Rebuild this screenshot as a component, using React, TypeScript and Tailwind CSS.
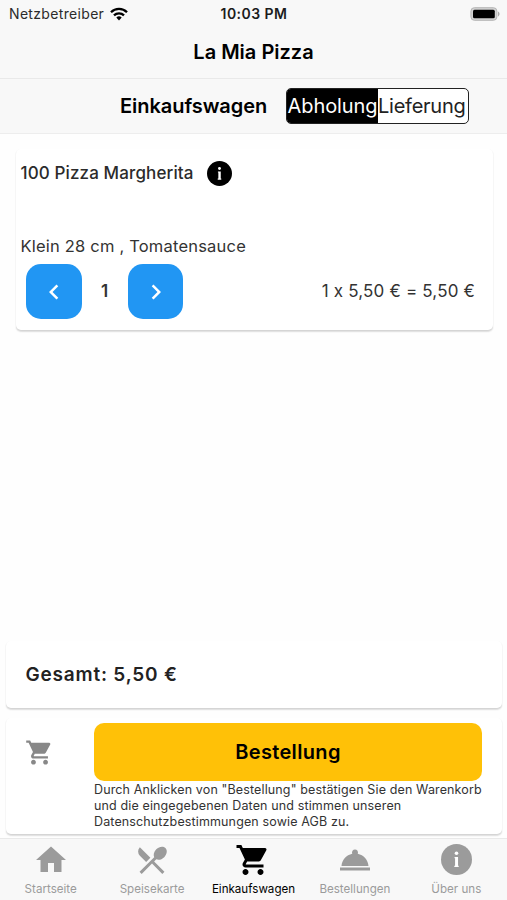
import React from "react";
import { MdHome, MdRestaurantMenu, MdShoppingCart, MdRoomService, MdChevronLeft, MdChevronRight } from "react-icons/md";

function InfoIcon({ className }: { className: string }) {
  return (
    <svg viewBox="0 0 24 24" className={className}>
      <circle cx="12" cy="12" r="12" fill="currentColor" />
      <circle cx="12" cy="7.2" r="1.4" fill="#fff" />
      <path d="M10.5 10h2.7v6.8h.5v1.1h-3.4v-1.1h.6v-5.7h-.4z" fill="#fff" />
    </svg>
  );
}

function WifiIcon() {
  return (
    <svg viewBox="0 0 18 14" className="ml-1.5 h-3.5 w-[18px]" fill="none" stroke="#000" strokeWidth="2.3">
      <path d="M1 5.2a11.3 11.3 0 0 1 16 0" />
      <path d="M4 8.4a7.1 7.1 0 0 1 10 0" />
      <path d="M6.3 10.5a3.8 3.8 0 0 1 5.4 0L9 13.4z" fill="#000" stroke="none" />
    </svg>
  );
}

function BatteryIcon() {
  return (
    <svg viewBox="0 0 30 14" className="h-3.5 w-[30px]">
      <rect x=".9" y=".7" width="26" height="12.6" rx="3.5" fill="#d2d2d2" stroke="#b5b5b5" />
      <rect x="3" y="2.7" width="21.8" height="8.6" rx="1.5" fill="#000" />
      <path d="M28 4.6c2 .7 2 4.1 0 4.8z" fill="#aaa" />
    </svg>
  );
}

const card = "rounded-[5px] bg-white shadow-[0_1.5px_1.5px_rgba(0,0,0,0.12),0_1px_1.5px_rgba(0,0,0,0.06)]";

const tabs = [
  { label: "Startseite", icon: <MdHome className="size-9" />, active: false },
  { label: "Speisekarte", icon: <MdRestaurantMenu className="size-9" />, active: false },
  { label: "Einkaufswagen", icon: <MdShoppingCart className="size-9" />, active: true },
  { label: "Bestellungen", icon: <MdRoomService className="size-9" />, active: false },
  { label: "Über uns", icon: <InfoIcon className="size-[31px]" />, active: false },
];

export default function App() {
  return (
    <div className="flex h-[900px] w-[507px] flex-col overflow-hidden bg-[#fefefe] font-['Inter',sans-serif] text-[#333]">
      <header className="h-[79px] shrink-0 border-b border-[#e9e9e9] bg-[#f8f8f8] text-black">
        <div className="grid h-[27px] grid-cols-3 items-center pr-[7px] pl-[9px]">
          <div className="flex items-center text-[14px] tracking-[0.33px] text-[#2b2b2b]">Netzbetreiber<WifiIcon /></div>
          <div className="-ml-px text-center text-[14px] font-semibold tracking-[0.45px] whitespace-nowrap text-[#1c1c1c]">10:03 PM</div>
          <div className="flex justify-end"><BatteryIcon /></div>
        </div>
        <h1 className="text-center text-[20px] leading-[51px] font-semibold">La Mia Pizza</h1>
      </header>
      <div className="flex h-[55px] shrink-0 items-center border-b border-[#ededed] bg-[#f8f8f8] pl-[120px] text-black">
        <h2 className="w-[166px] text-[20px] font-semibold tracking-[-0.05px]">Einkaufswagen</h2>
        <div className="flex h-9 w-[183px] overflow-hidden rounded-[5px] border border-[#222] bg-white text-[20px] leading-[34px]">
          <button className="flex w-[91px] justify-center bg-black tracking-[-0.1px] whitespace-nowrap text-white">Abholung</button>
          <button className="flex flex-1 justify-start tracking-[-0.25px] whitespace-nowrap text-[#222]">Lieferung</button>
        </div>
      </div>
      <main className="flex min-h-0 flex-1 flex-col">
        <section className={`${card} mr-[14px] ml-[15.5px] mt-[15px] h-[181px]`}>
          <div className="flex h-[49px] items-center pl-[5px]">
            <span className="w-[186px] text-[17px] font-medium tracking-[0.12px] whitespace-nowrap text-[#2b2b2b]">100 Pizza Margherita</span>
            <InfoIcon className="size-[25px] text-black" />
          </div>
          <p className="mt-[36px] pl-[5px] text-[16.5px] leading-[24px] tracking-[0.2px]">Klein 28 cm , Tomatensauce</p>
          <div className="mt-[6px] flex items-center pr-[18px] pl-[10.5px]">
            <button className="flex h-[55px] w-[56px] items-center justify-center rounded-[15px] bg-[#2196f3] text-white"><MdChevronLeft className="size-[30px]" /></button>
            <span className="w-[46px] pr-px text-center text-[17px] font-semibold">1</span>
            <button className="flex h-[55px] w-[55px] items-center justify-center rounded-[15px] bg-[#2196f3] text-white"><MdChevronRight className="size-[30px]" /></button>
            <span className="ml-auto text-[17px] tracking-[0.17px] whitespace-nowrap">1 x 5,50 € = 5,50 €</span>
          </div>
        </section>
        <div className="flex-1" />
        <section className={`${card} mr-[5px] ml-[5.5px] flex h-[67px] items-center pt-px pl-[20px] text-[19px] font-semibold tracking-[0.8px] text-[#222]`}>Gesamt: 5,50 €</section>
        <section className={`${card} mr-[5px] ml-[5.5px] mt-[10px] mb-[4px] flex h-[116px]`}>
          <div className="w-[88.5px] pt-[20px] pl-[19px]"><MdShoppingCart className="size-[29px] text-[#888]" /></div>
          <div className="pt-[5px]">
            <button className="block h-[58px] w-[388px] rounded-[10px] bg-[#ffc107] text-[20px] leading-[58px] font-semibold tracking-[0.35px] text-black">Bestellung</button>
            <p className="mt-px text-[12.5px] leading-[16px] tracking-[0.13px] whitespace-nowrap">
              Durch Anklicken von "Bestellung" bestätigen Sie den Warenkorb<br />und die eingegebenen Daten und stimmen unseren<br />Datenschutzbestimmungen sowie AGB zu.
            </p>
          </div>
        </section>
      </main>
      <nav className="grid h-[62px] shrink-0 grid-cols-5 border-t border-[#e9e9e9] bg-[#f8f8f8]">
        {tabs.map((tab) => (
          <button key={tab.label} className={`flex flex-col items-center ${tab.active ? "text-black" : "text-[#9b9b9b]"}`}>
            <span className="flex h-[41px] items-center">{tab.icon}</span>
            <span className="mt-px text-[11.6px] leading-[16px] whitespace-nowrap">{tab.label}</span>
          </button>
        ))}
      </nav>
    </div>
  );
}
